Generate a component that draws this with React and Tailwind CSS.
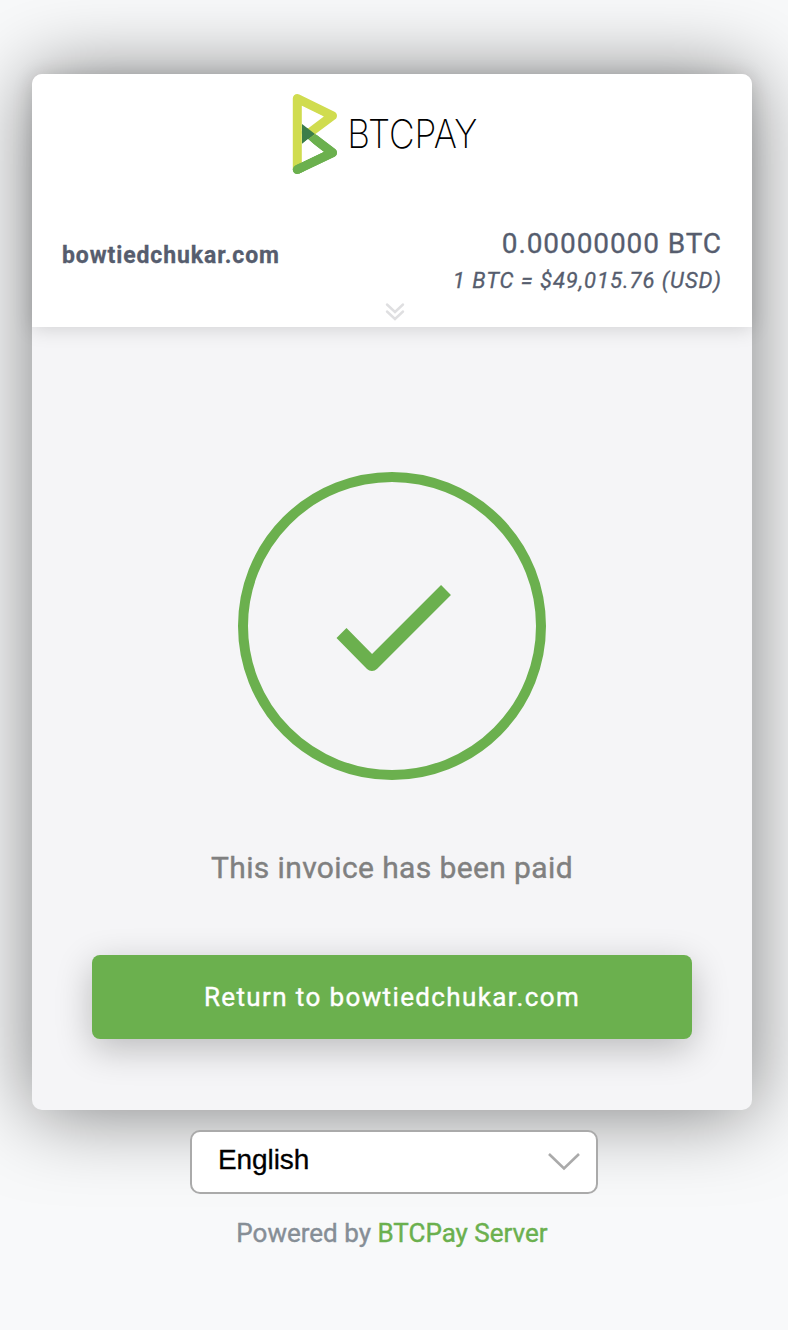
function Logo() {
  return (
    <svg width="200" height="84" viewBox="0 0 200 84" className="ml-[259px] mt-[18px] block overflow-visible" aria-label="BTCPay">
      <g fill="none" strokeWidth="9" strokeLinecap="round" strokeLinejoin="round">
        <path d="M6.3 77.5 L41.5 60.7 L15 40.5" stroke="#6bb04e" />
        <path d="M6.3 77.5 V6.5 L41.5 23.7 L15 43.5" stroke="#d0dc4f" strokeLinecap="butt" />
        <path d="M6.3 77.5 L41.5 60.7 L23 46.5" stroke="#6bb04e" strokeLinecap="butt" />
        <path d="M6.3 77.5 L10 75.7" stroke="#6bb04e" />
      </g>
      <path d="M11 32 L24 42 L11 52 Z" fill="#3b7d49" />
      <path d="M11 14.5 L31 24 L11 32 Z" fill="#fff" />
      <path d="M11 52 L17 47 L31 60 L11 70 Z" fill="#fff" />
      <text transform="translate(56.2 56.2) scale(0.893 1)" fontSize="39.5" fontWeight="200" className="font-['Inter',sans-serif] [-webkit-text-stroke:0.45px_black]">BTCPAY</text>
    </svg>
  );
}

export default function App() {
  return (
    <div className="flex h-[1330px] w-[788px] flex-col bg-[#f8f9fa] pl-8 pt-[74px] font-['Roboto',sans-serif]">
      <main className="h-[1036px] w-[720px] rounded-[10px] bg-[#f5f5f7] shadow-[0_2px_80px_rgba(0,0,0,0.5)]">
        <header className="flex h-[253px] flex-col rounded-t-[10px] bg-white shadow-[0_2px_20px_rgba(0,0,0,0.15)]">
          <Logo />
          <div className="mt-[51px] flex h-[71px] items-start justify-between px-[30px] text-[#565d6e] [-webkit-text-stroke:0.3px_#565d6e]">
            <div className="mt-[15px] text-[23px] font-bold leading-7 tracking-[0.9px]">bowtiedchukar.com</div>
            <div className="flex flex-col items-end">
              <div className="text-[28px] leading-[34px] tracking-[0.9px]">0.00000000 BTC</div>
              <div className="mt-[6px] text-[22px] italic leading-7 tracking-[0.98px]">1 BTC = $49,015.76 (USD)</div>
            </div>
          </div>
          <svg width="20" height="20" viewBox="0 0 20 20" className="ml-[353px] mt-[4px]" fill="none" stroke="#dfdfe1" strokeWidth="2.4" strokeLinecap="round">
            <path d="M2 2.5 L10 10 L18 2.5 M2 9.5 L10 17 L18 9.5" />
          </svg>
        </header>
        <section className="flex flex-col items-center pt-[145px]">
          <svg width="308" height="308" viewBox="0 0 308 308" fill="none" stroke="#6bb04e" strokeLinejoin="round" className="block">
            <circle cx="154" cy="154" r="149" strokeWidth="10" />
            <path d="M103.5 161 L134 192 L208 118" strokeWidth="14" />
          </svg>
          <p className="mt-[69px] text-[30px] leading-[38px] tracking-[0.38px] text-[#808080] [-webkit-text-stroke:0.4px_#808080]">This invoice has been paid</p>
          <button className="mt-[68px] h-[84px] w-[600px] rounded-[8px] bg-[#6bb04e] text-[26px] tracking-[1.38px] text-white [-webkit-text-stroke:0.4px_white] shadow-[0_10px_36px_rgba(0,0,0,0.24)]">Return to bowtiedchukar.com</button>
        </section>
      </main>
      <footer className="flex w-[720px] flex-col items-center pt-5">
        <div className="ml-1 flex h-16 w-[408px] items-center justify-between rounded-[10px] border-2 border-[#aaa] bg-white pl-[26px] pr-4">
          <span className="mb-1 font-['Liberation_Sans',sans-serif] text-[28px] leading-8 tracking-[-0.1px] text-black [-webkit-text-stroke:0.3px_black]">English</span>
          <svg width="32" height="18" viewBox="0 0 32 18" fill="none" stroke="#aaa" strokeWidth="2.6">
            <path d="M1 1 L16 15.5 L31 1" />
          </svg>
        </div>
        <div className="mt-[23px] text-[26px] leading-8 text-[#868e96] [-webkit-text-stroke:0.4px_currentColor]">Powered by <span className="text-[#6bb04e] [-webkit-text-stroke:0.4px_#6bb04e]">BTCPay Server</span></div>
      </footer>
    </div>
  );
}
